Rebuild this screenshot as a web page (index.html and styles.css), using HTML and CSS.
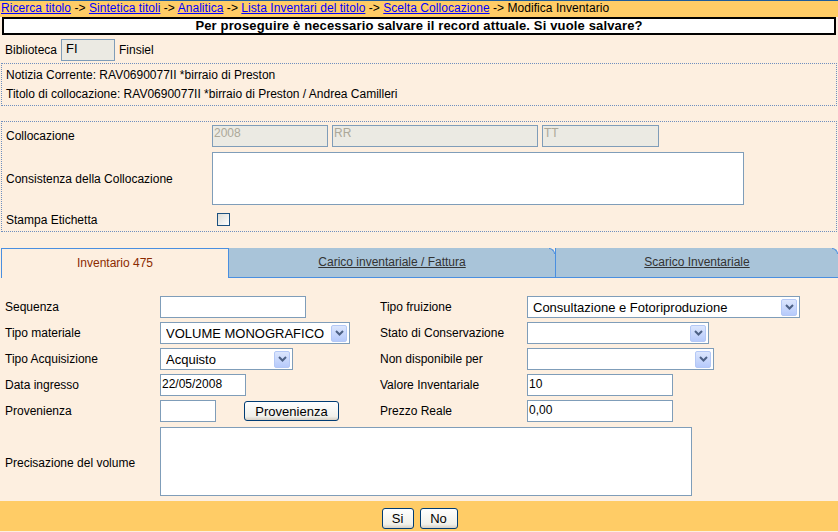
FILE: index.html
```html
<!DOCTYPE html>
<html>
<head>
<meta charset="utf-8">
<link rel="stylesheet" href="styles.css">
</head>
<body>
<div class="crumbs">
  <a href="#">Ricerca titolo</a> -&gt; <a href="#">Sintetica titoli</a> -&gt; <a href="#">Analitica</a> -&gt; <a href="#">Lista Inventari del titolo</a> -&gt; <a href="#">Scelta Collocazione</a> -&gt; Modifica Inventario
</div>
<div class="msg">Per proseguire è necessario salvare il record attuale. Si vuole salvare?</div>

<div class="bib">
  <span class="lbl">Biblioteca</span>
  <span class="inp gray bibval">FI</span>
  <span>Finsiel</span>
</div>

<div class="box info">
  <div class="line">Notizia Corrente: RAV0690077II *birraio di Preston</div>
  <div class="line">Titolo di collocazione: RAV0690077II *birraio di Preston / Andrea Camilleri</div>
</div>

<div class="box coll">
  <div class="crow">
    <span class="clbl">Collocazione</span>
    <span class="inp dis w116">2008</span>
    <span class="inp dis w206">RR</span>
    <span class="inp dis w117">TT</span>
  </div>
  <div class="crow tall">
    <span class="clbl">Consistenza della Collocazione</span>
    <span class="inp area1"></span>
  </div>
  <div class="crow chk">
    <span class="clbl">Stampa Etichetta</span>
    <span class="checkbox"></span>
  </div>
</div>

<div class="tabs">
  <div class="tab active">Inventario 475</div>
  <div class="tab t2"><u>Carico inventariale / Fattura</u></div>
  <div class="tab t3"><u>Scarico Inventariale</u></div>
</div>

<div class="form">
  <span class="flbl">Sequenza</span>
  <div class="fcell"><span class="inp w146"></span></div>
  <span class="flbl r">Tipo fruizione</span>
  <div class="fcell"><span class="sel w273"><span class="stxt">Consultazione e Fotoriproduzione</span><span class="sbtn"><svg width="9" height="6" viewBox="0 0 9 6"><path d="M1 1 L4.5 4.5 L8 1" fill="none" stroke="#4d6185" stroke-width="2"/></svg></span></span></div>

  <span class="flbl">Tipo materiale</span>
  <div class="fcell"><span class="sel w190"><span class="stxt">VOLUME MONOGRAFICO</span><span class="sbtn"><svg width="9" height="6" viewBox="0 0 9 6"><path d="M1 1 L4.5 4.5 L8 1" fill="none" stroke="#4d6185" stroke-width="2"/></svg></span></span></div>
  <span class="flbl r">Stato di Conservazione</span>
  <div class="fcell"><span class="sel w182"><span class="stxt"></span><span class="sbtn"><svg width="9" height="6" viewBox="0 0 9 6"><path d="M1 1 L4.5 4.5 L8 1" fill="none" stroke="#4d6185" stroke-width="2"/></svg></span></span></div>

  <span class="flbl">Tipo Acquisizione</span>
  <div class="fcell"><span class="sel w133"><span class="stxt">Acquisto</span><span class="sbtn"><svg width="9" height="6" viewBox="0 0 9 6"><path d="M1 1 L4.5 4.5 L8 1" fill="none" stroke="#4d6185" stroke-width="2"/></svg></span></span></div>
  <span class="flbl r">Non disponibile per</span>
  <div class="fcell"><span class="sel w187"><span class="stxt"></span><span class="sbtn"><svg width="9" height="6" viewBox="0 0 9 6"><path d="M1 1 L4.5 4.5 L8 1" fill="none" stroke="#4d6185" stroke-width="2"/></svg></span></span></div>

  <span class="flbl">Data ingresso</span>
  <div class="fcell"><span class="inp w86 val">22/05/2008</span></div>
  <span class="flbl r">Valore Inventariale</span>
  <div class="fcell"><span class="inp w146 val">10</span></div>

  <span class="flbl">Provenienza</span>
  <div class="fcell"><span class="inp w56"></span><span class="btn provbtn">Provenienza</span></div>
  <span class="flbl r">Prezzo Reale</span>
  <div class="fcell"><span class="inp w146 val">0,00</span></div>

  <span class="flbl area">Precisazione del volume</span>
  <div class="fcell span3"><span class="inp area2"></span></div>
</div>

<div class="bottom">
  <span class="btn sibtn">Si</span>
  <span class="btn nobtn">No</span>
</div>
</body>
</html>
```

FILE: styles.css
```css
html, body {
  margin: 0;
  padding: 0;
  background: #fdefe0;
  font-family: "Liberation Sans", Arial, sans-serif;
  font-size: 12px;
  color: #000;
}

.crumbs {
  background: #ffcc66;
  border-top: 1px solid #1d5c9c;
  height: 16px;
  line-height: 15px;
  padding-left: 1px;
  font-size: 12px;
  white-space: nowrap;
  letter-spacing: 0.05px;
}
.crumbs a {
  color: #0000ff;
  text-decoration: underline;
}

.msg {
  margin: 0 2px 0 2px;
  border: 2px solid #000;
  background: #fff;
  height: 14px;
  line-height: 14px;
  text-align: center;
  font-weight: bold;
  font-size: 13px;
  letter-spacing: 0.15px;
}

.bib {
  display: flex;
  align-items: center;
  height: 23px;
  margin-top: 3px;
  padding-left: 5px;
}
.bib .lbl { width: 56px; }
.bibval {
  width: 54px;
  height: 21px;
  font-size: 13px;
  line-height: 17px;
  margin-right: 4px;
  padding-left: 4px;
}

.inp {
  display: inline-block;
  box-sizing: border-box;
  border: 1px solid #7f9db9;
  background: #fff;
  height: 22px;
  vertical-align: top;
}
.inp.gray { background: #ebeae3; color: #000; }
.inp.dis {
  background: #ebeae3;
  color: #aca899;
  font-size: 12px;
  line-height: 14px;
  padding-left: 1px;
  margin-right: 4px;
}
.inp.val {
  font-size: 12px;
  line-height: 19px;
  padding-left: 1px;
}

.box {
  border: 1px dotted #6f8fbf;
  margin: 0 1px;
}
.info {
  margin-top: 2px;
  padding: 2px 4px 1px 4px;
}
.info .line {
  height: 19px;
  line-height: 18px;
}

.coll {
  margin-top: 15px;
  padding: 3px 0 5px 4px;
}
.crow {
  display: flex;
  align-items: center;
  height: 22px;
}
.crow.tall {
  height: 53px;
  margin-top: 5px;
}
.crow.chk {
  height: 13px;
  margin-top: 8px;
}
.clbl { width: 206px; }
.w116 { width: 116px; }
.w206 { width: 206px; }
.w117 { width: 117px; }
.area1 {
  width: 532px;
  height: 53px;
}
.checkbox {
  display: inline-block;
  width: 13px;
  height: 13px;
  box-sizing: border-box;
  border: 1px solid #1c5180;
  background: linear-gradient(135deg, #dcdcd6, #fff);
  margin-left: 5px;
}

.tabs {
  display: flex;
  margin-top: 16px;
  height: 30px;
}
.tab {
  box-sizing: border-box;
  height: 30px;
  line-height: 30px;
  text-align: center;
  font-size: 12px;
  position: relative;
}
.tab.active {
  width: 228px;
  margin-left: 1px;
  border-top: 1px solid #4a8fe0;
  border-left: 1px solid #4a8fe0;
  border-right: 1px solid #4a8fe0;
  color: #8b2a00;
  line-height: 29px;
}
.tab.t2, .tab.t3 {
  background: #a9c4d9;
  color: #333;
  border-bottom: 1px solid #4a8fe0;
  border-top-right-radius: 7px;
  line-height: 28px;
}
.tab.t2 { width: 326px; }
.tab.t3 {
  flex: 1;
  border-left: 1px solid #4a8fe0;
}
.tab.t2::after, .tab.t3::after {
  content: "";
  position: absolute;
  right: 0;
  top: 0;
  width: 6px;
  height: 6px;
  border-top: 1px solid #4a8fe0;
  border-right: 1px solid #4a8fe0;
  border-top-right-radius: 7px;
  box-sizing: border-box;
}

.form {
  display: grid;
  grid-template-columns: 160px 220px 147px 1fr;
  grid-template-rows: repeat(5, 26px) 73px;
  padding-top: 18px;
}
.flbl {
  padding-left: 5px;
  line-height: 22px;
}
.flbl.r { padding-left: 0; }
.fcell {
  display: flex;
  align-items: flex-start;
}
.w146 { width: 146px; }
.w86 { width: 86px; }
.w56 { width: 56px; }

.sel {
  display: inline-flex;
  align-items: center;
  box-sizing: border-box;
  height: 22px;
  border: 1px solid #7f9db9;
  background: #fff;
  font-size: 13px;
  padding-left: 5px;
  padding-right: 2px;
}
.stxt { flex: 1; white-space: nowrap; overflow: hidden; }
.sbtn {
  width: 16px;
  height: 17px;
  box-sizing: border-box;
  border: 1px solid #b4c8f6;
  border-radius: 2px;
  background: linear-gradient(#dce6fd, #b6cafb);
  display: flex;
  align-items: center;
  justify-content: center;
}
.w273 { width: 273px; }
.w190 { width: 190px; }
.w182 { width: 182px; }
.w133 { width: 133px; }
.w187 { width: 187px; }

.btn {
  display: inline-flex;
  align-items: center;
  justify-content: center;
  box-sizing: border-box;
  border: 1px solid #003c74;
  border-radius: 3px;
  background: linear-gradient(#ffffff, #f0f0ea 80%, #d6d0c5);
  font-size: 13px;
  color: #000;
}
.provbtn {
  width: 95px;
  height: 20px;
  margin-left: 28px;
  margin-top: 1px;
}

.form .area {
  height: 73px;
  display: flex;
  align-items: center;
  line-height: normal;
}
.span3 { grid-column: span 3; }
.area2 {
  width: 532px;
  height: 69px;
  margin-top: 1px;
}

.bottom {
  background: #ffcc66;
  height: 30px;
  margin-top: 2px;
  display: flex;
  align-items: flex-start;
  justify-content: center;
  padding-top: 7px;
  box-sizing: border-box;
  gap: 6px;
  padding-left: 1px;
}
.sibtn { width: 32px; height: 21px; }
.nobtn { width: 38px; height: 21px; }
```
